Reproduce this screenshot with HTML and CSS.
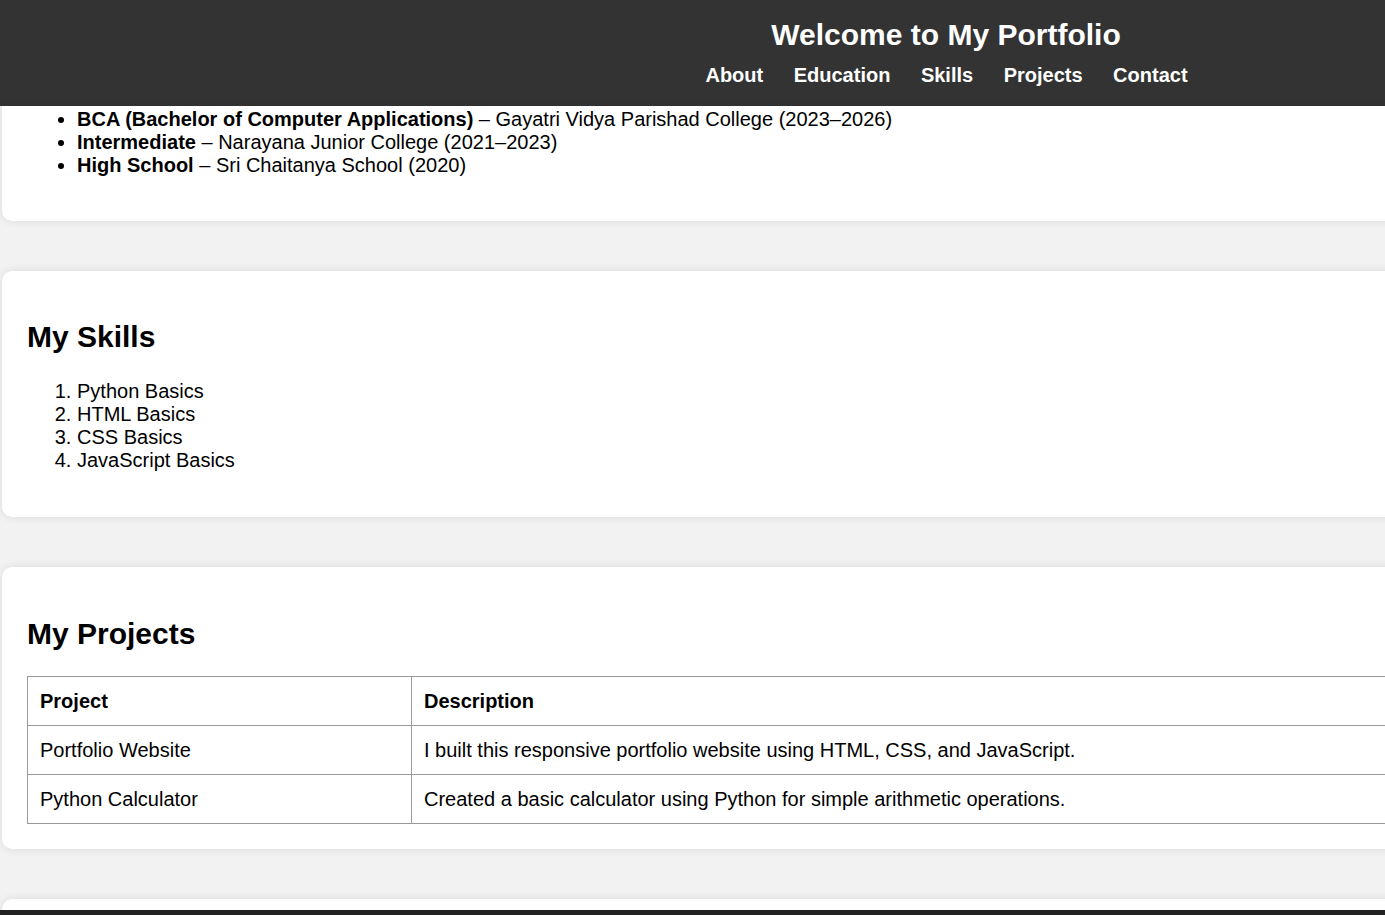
FILE: index.html
```html
<!DOCTYPE html>
<html lang="en">
<head>
<meta charset="utf-8">
<title>My Portfolio</title>
<link rel="stylesheet" href="styles.css">
</head>
<body>
<div class="page">
  <header class="site-header">
    <h1 class="site-title">Welcome to My Portfolio</h1>
    <nav class="site-nav">
      <a href="#about">About</a>
      <a href="#education">Education</a>
      <a href="#skills">Skills</a>
      <a href="#projects">Projects</a>
      <a href="#contact">Contact</a>
    </nav>
  </header>
  <main class="content">
    <section class="card card-cut" id="education">
      <ul class="list">
        <li><strong>BCA (Bachelor of Computer Applications)</strong> – Gayatri Vidya Parishad College (2023–2026)</li>
        <li><strong>Intermediate</strong> – Narayana Junior College (2021–2023)</li>
        <li><strong>High School</strong> – Sri Chaitanya School (2020)</li>
      </ul>
    </section>
    <section class="card" id="skills">
      <h2 class="card-title">My Skills</h2>
      <ol class="list">
        <li>Python Basics</li>
        <li>HTML Basics</li>
        <li>CSS Basics</li>
        <li>JavaScript Basics</li>
      </ol>
    </section>
    <section class="card card-projects" id="projects">
      <h2 class="card-title">My Projects</h2>
      <table class="projects">
        <colgroup><col class="col-project"><col></colgroup>
        <thead>
          <tr><th>Project</th><th>Description</th></tr>
        </thead>
        <tbody>
          <tr><td>Portfolio Website</td><td>I built this responsive portfolio website using HTML, CSS, and JavaScript.</td></tr>
          <tr><td>Python Calculator</td><td>Created a basic calculator using Python for simple arithmetic operations.</td></tr>
        </tbody>
      </table>
    </section>
    <section class="card card-contact" id="contact"></section>
  </main>
</div>
<footer class="site-footer"></footer>
</body>
</html>
```
FILE: styles.css
```css
html, body {
  margin: 0;
  padding: 0;
  overflow-x: hidden;
}
body {
  background: #f2f2f2;
  font-family: "Liberation Sans", Arial, sans-serif;
  font-size: 20px;
  color: #000;
}
.page {
  width: 1892px;
}
.site-header {
  background: #333;
  color: #fff;
  text-align: center;
  padding: 18px 0 20px;
  height: 68px;
}
.site-title {
  margin: 0;
  font-size: 30px;
  font-weight: bold;
  line-height: 34.5px;
}
.site-nav {
  margin-top: 11px;
  display: flex;
  justify-content: center;
  gap: 30.5px;
  padding-left: 1px;
}
.site-nav a {
  color: #fff;
  text-decoration: none;
  font-weight: bold;
  font-size: 20px;
  line-height: 23px;
}
.content {
  display: flex;
  flex-direction: column;
  gap: 50px;
  padding-bottom: 60px;
}
.card {
  background: #fff;
  margin: 0 2px;
  padding: 25px;
  border-radius: 10px;
  box-shadow: 0 0 10px rgba(0, 0, 0, 0.1);
}
.card-cut {
  padding-top: 2px;
  padding-bottom: 24px;
  border-radius: 0 0 10px 10px;
}
.card-contact {
  min-height: 160px;
}
.card-title {
  font-size: 30px;
  margin: 24px 0 25px;
  line-height: 34.5px;
}
.card-projects .card-title {
  margin-top: 25px;
}
.list {
  margin: 0 0 20px;
  padding-left: 50px;
  line-height: 23px;
}
.projects {
  width: 1838px;
  border-collapse: collapse;
  table-layout: fixed;
}
.col-project {
  width: 384px;
}
.projects th,
.projects td {
  border: 1px solid #999;
  padding: 13px 12px;
  text-align: left;
  line-height: 22px;
}
.site-footer {
  position: fixed;
  left: 0;
  right: 0;
  bottom: 0;
  height: 5px;
  background: #222;
}
```
